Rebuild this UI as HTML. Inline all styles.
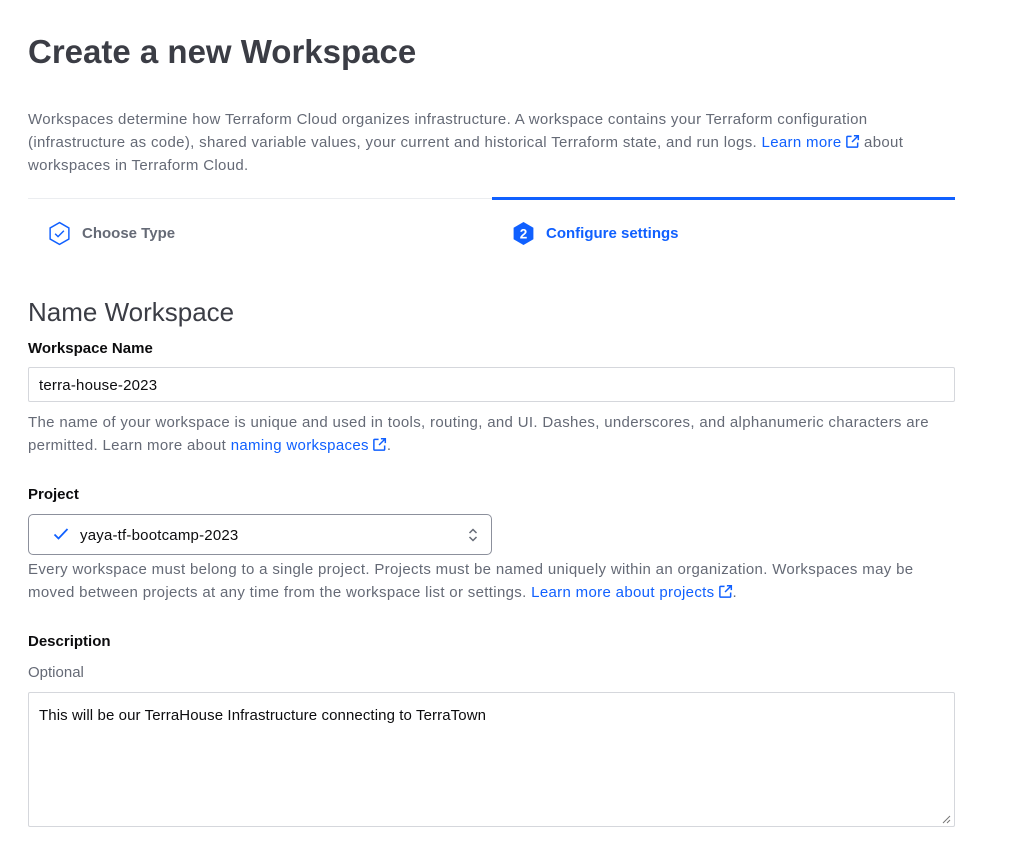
<!DOCTYPE html>
<html><head><meta charset="utf-8"><style>
body{margin:0;background:#fff;font-family:"Liberation Sans",sans-serif;color:#656a76;}
.a{position:absolute;white-space:nowrap}
.p{font-size:15px;line-height:23px;letter-spacing:0.33px}
a{color:#1060ff;text-decoration:none}
.lbl{font-size:15px;font-weight:bold;color:#0c0c0e}
.box{position:absolute;border:1px solid #d5d7dc;border-radius:2px;box-sizing:border-box;background:#fff}
.ext{display:inline-block;vertical-align:-2px;margin-left:3px}
</style></head><body>
<div class="a" style="left:28px;top:33px;font-size:33px;font-weight:bold;color:#3b3d45">Create a new Workspace</div>
<div class="a p" style="left:28px;top:108px">Workspaces determine how Terraform Cloud organizes infrastructure. A workspace contains your Terraform configuration<br>(infrastructure as code), shared variable values, your current and historical Terraform state, and run logs. <a>Learn more<svg class="ext" width="15" height="15" viewBox="0 0 16 16" fill="none" stroke="#1060ff" stroke-width="1.6"><path d="M7 2.5H3a1 1 0 0 0-1 1v9.5a1 1 0 0 0 1 1h9.5a1 1 0 0 0 1-1V9M9.5 1.8h4.7v4.7M14 2 7.5 8.5"/></svg></a> about<br>workspaces in Terraform Cloud.</div>
<div class="a" style="left:28px;top:198px;width:464px;height:1px;background:#ebedf0"></div>
<div class="a" style="left:492px;top:197px;width:463px;height:3px;background:#1060ff"></div>
<svg class="a" style="left:47px;top:221px" width="25" height="25" viewBox="0 0 24 24" fill="none" stroke="#1060ff" stroke-width="1.4"><path d="M12 1.5 21 6.7v10.6L12 22.5 3 17.3V6.7z"/><path d="M7.8 12.2l2.8 2.8 5.6-5.6"/></svg>
<div class="a" style="left:82px;top:225px;font-size:15px;font-weight:bold;color:#656a76">Choose Type</div>
<svg class="a" style="left:511px;top:221px" width="25" height="25" viewBox="0 0 24 24"><path d="M12 1 21.5 6.5v11L12 23 2.5 17.5v-11z" fill="#1060ff"/><text x="12" y="17" font-size="13" font-weight="bold" fill="#fff" text-anchor="middle" font-family="Liberation Sans">2</text></svg>
<div class="a" style="left:546px;top:225px;font-size:15px;font-weight:bold;color:#1060ff">Configure settings</div>
<div class="a" style="left:28px;top:297px;font-size:26px;color:#3b3d45">Name Workspace</div>
<div class="a lbl" style="left:28px;top:340px">Workspace Name</div>
<div class="box" style="left:28px;top:367px;width:927px;height:35px"></div>
<div class="a" style="left:39px;top:377px;font-size:15px;color:#0c0c0e;letter-spacing:0.2px">terra-house-2023</div>
<div class="a p" style="left:28px;top:411px">The name of your workspace is unique and used in tools, routing, and UI. Dashes, underscores, and alphanumeric characters are<br>permitted. Learn more about <a>naming workspaces<svg class="ext" width="15" height="15" viewBox="0 0 16 16" fill="none" stroke="#1060ff" stroke-width="1.6"><path d="M7 2.5H3a1 1 0 0 0-1 1v9.5a1 1 0 0 0 1 1h9.5a1 1 0 0 0 1-1V9M9.5 1.8h4.7v4.7M14 2 7.5 8.5"/></svg></a>.</div>
<div class="a lbl" style="left:28px;top:486px">Project</div>
<div class="box" style="left:28px;top:514px;width:464px;height:41px;border-color:#8c909c;border-radius:5px"></div>
<svg class="a" style="left:53px;top:527px" width="16" height="14" viewBox="0 0 16 14" fill="none" stroke="#1060ff" stroke-width="1.8"><path d="M1.5 7.5l4 4 9-9.5"/></svg>
<div class="a" style="left:80px;top:527px;font-size:15px;color:#0c0c0e;letter-spacing:0.2px">yaya-tf-bootcamp-2023</div>
<svg class="a" style="left:467px;top:527px" width="12" height="16" viewBox="0 0 12 16" fill="none" stroke="#656a76" stroke-width="1.5"><path d="M2.5 6 6 2.5 9.5 6M2.5 10 6 13.5 9.5 10"/></svg>
<div class="a p" style="left:28px;top:558px">Every workspace must belong to a single project. Projects must be named uniquely within an organization. Workspaces may be<br>moved between projects at any time from the workspace list or settings. <a>Learn more about projects<svg class="ext" width="15" height="15" viewBox="0 0 16 16" fill="none" stroke="#1060ff" stroke-width="1.6"><path d="M7 2.5H3a1 1 0 0 0-1 1v9.5a1 1 0 0 0 1 1h9.5a1 1 0 0 0 1-1V9M9.5 1.8h4.7v4.7M14 2 7.5 8.5"/></svg></a>.</div>
<div class="a lbl" style="left:28px;top:633px">Description</div>
<div class="a" style="left:28px;top:664px;font-size:15px">Optional</div>
<div class="box" style="left:28px;top:692px;width:927px;height:135px"></div>
<div class="a" style="left:39px;top:707px;font-size:15px;color:#0c0c0e;letter-spacing:0.1px">This will be our TerraHouse Infrastructure connecting to TerraTown</div>
<svg class="a" style="left:941px;top:814px" width="10" height="10" viewBox="0 0 10 10" stroke="#777" stroke-width="1"><path d="M9 2 2 9M9 6 6 9"/></svg>
</body></html>
